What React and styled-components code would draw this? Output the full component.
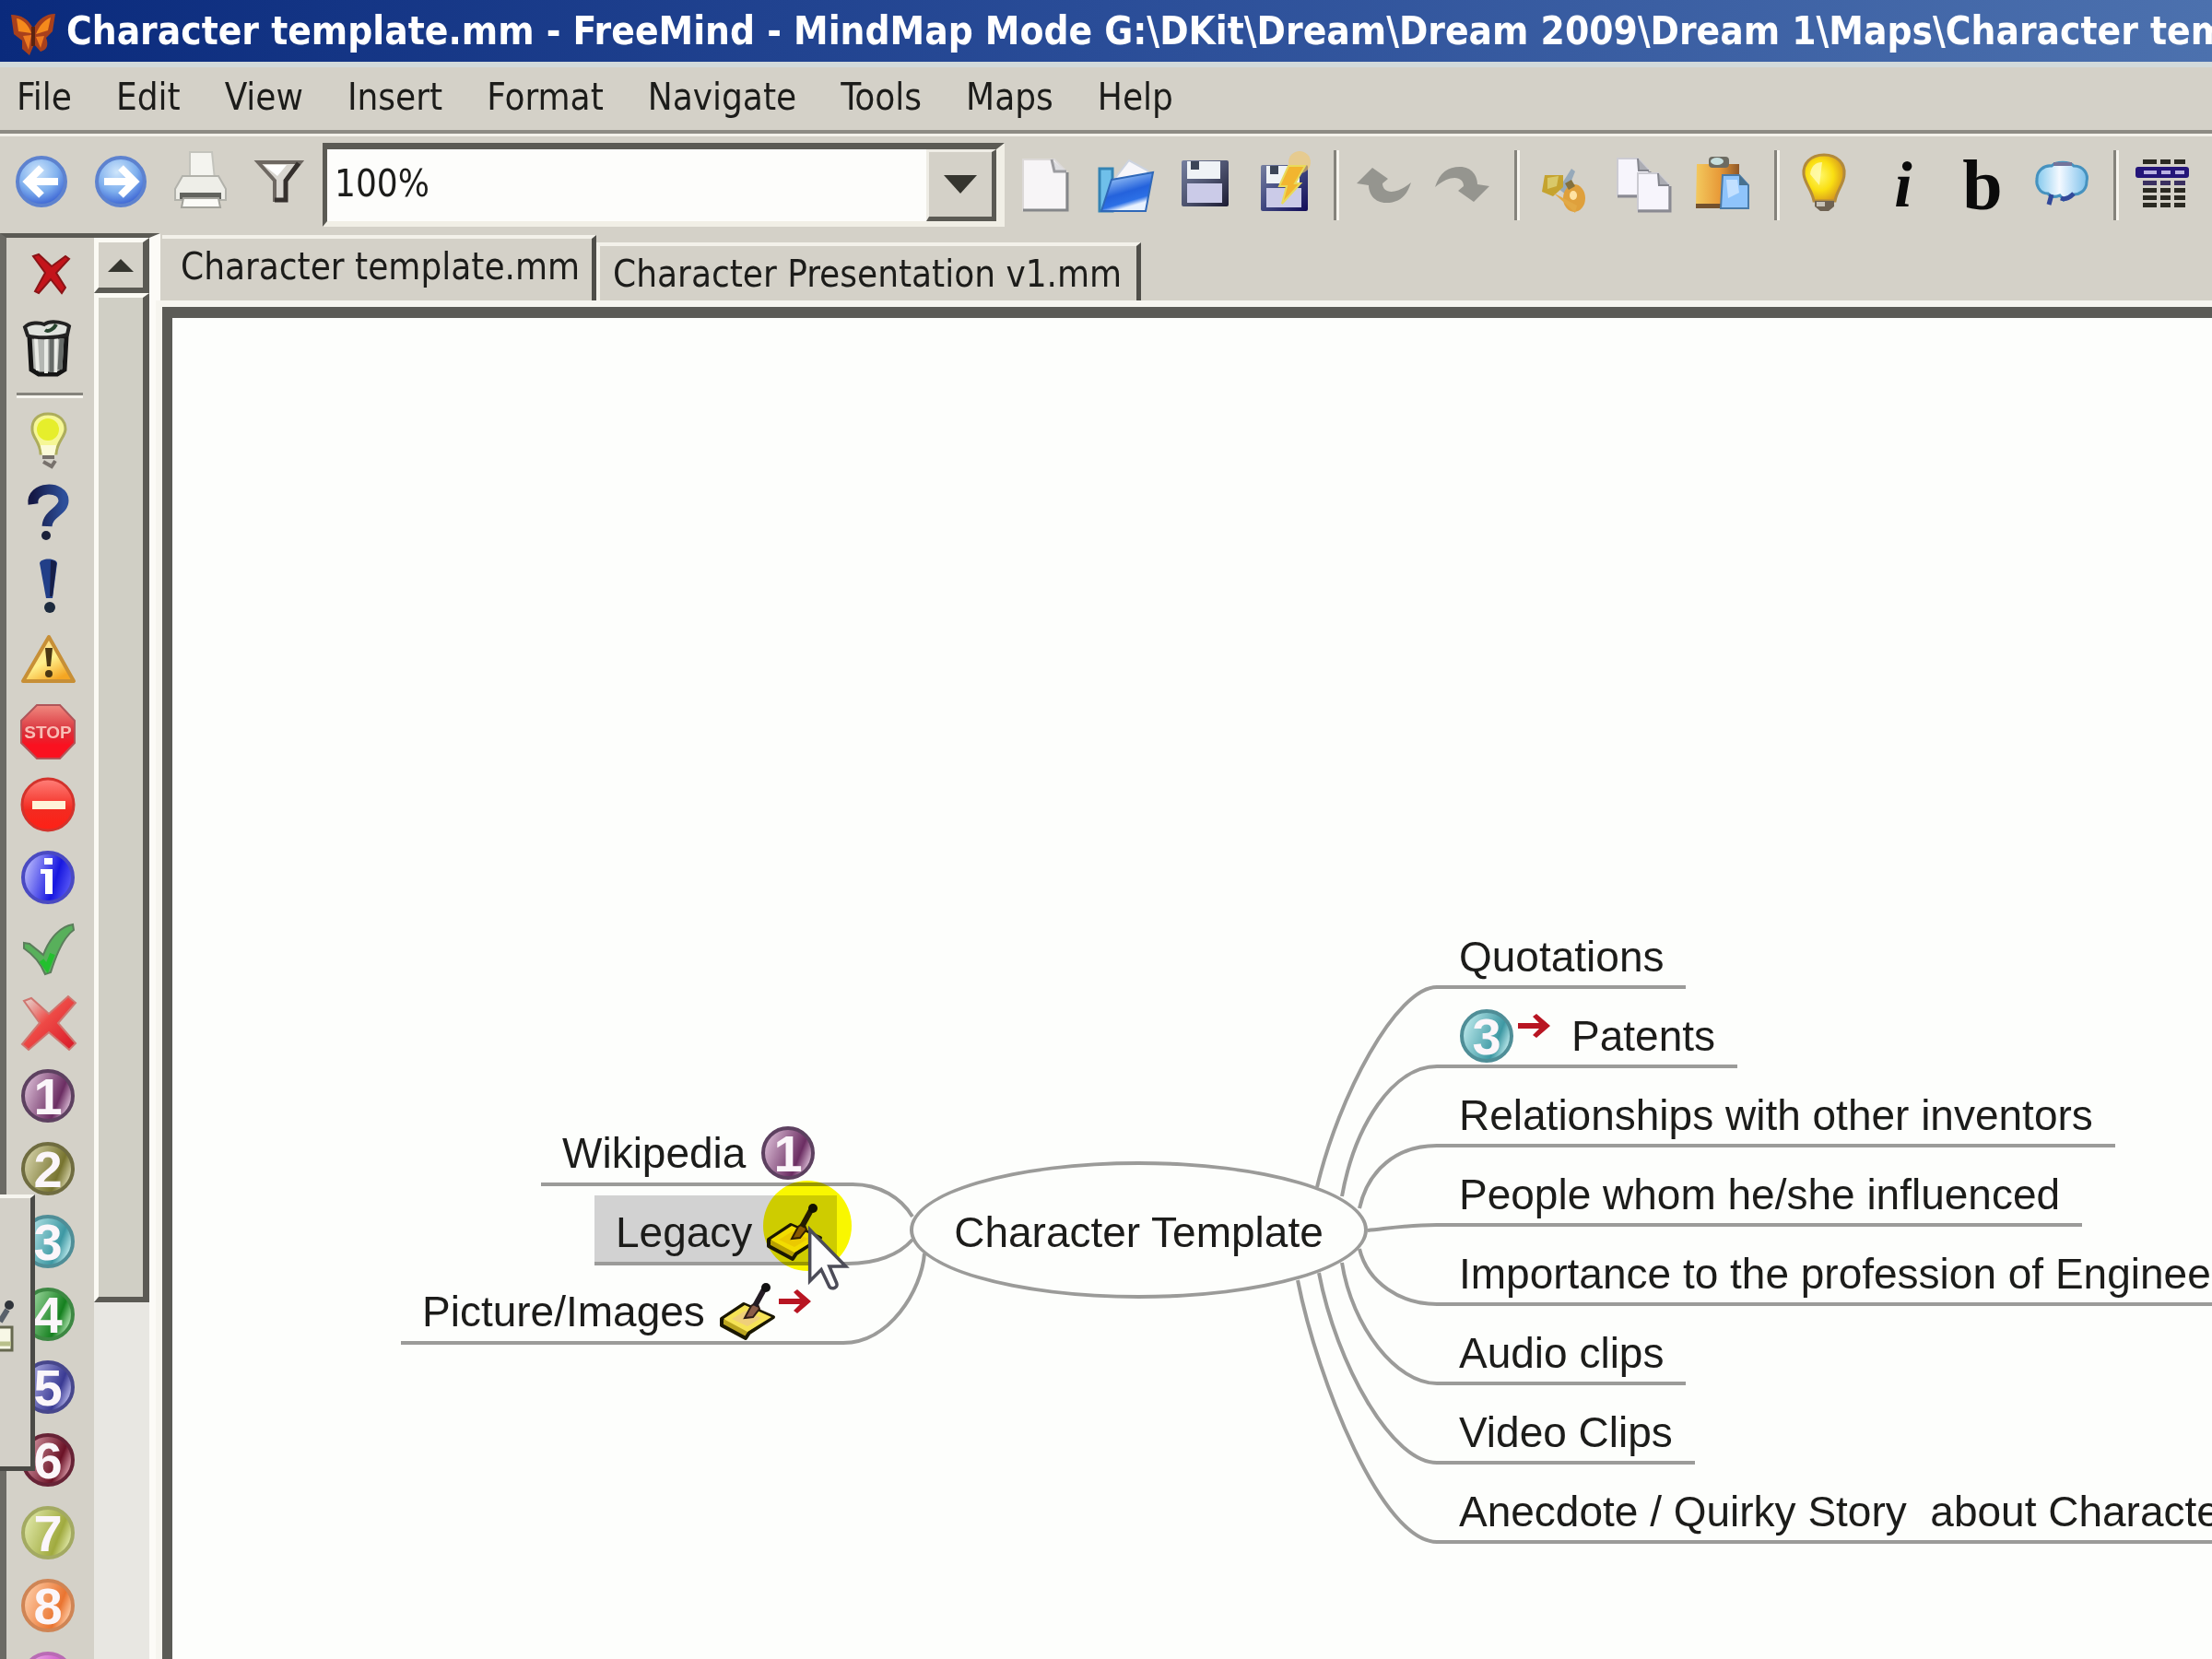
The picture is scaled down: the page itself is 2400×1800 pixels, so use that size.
import React, { useState } from "react";
import styled, { createGlobalStyle } from "styled-components";

const UI_FONT = `"DejaVu Sans Condensed", "DejaVu Sans", sans-serif`;
const MAP_FONT = `"Liberation Sans", Arial, sans-serif`;

const ROW_STEP = 86;
const RIGHT_X = 1372;

const menus = ["File", "Edit", "View", "Insert", "Format", "Navigate", "Tools", "Maps", "Help"];

const rightNodes = [
  { text: "Quotations" },
  { text: "Patents", ball: 3, link: true },
  { text: "Relationships with other inventors" },
  { text: "People whom he/she influenced" },
  { text: "Importance to the profession of Engineering" },
  { text: "Audio clips" },
  { text: "Video Clips" },
  { text: "Anecdote / Quirky Story  about Character" },
];

const leftNodes = [
  { text: "Wikipedia", x: 400, y: 866, ball: 1 },
  { text: "Legacy", x: 458, y: 952, note: true, selected: true },
  { text: "Picture/Images", x: 248, y: 1038, note: true, link: true },
];

const edges = [
  // right side
  "M1242 943 C1265 845 1328 726 1372 726",
  "M1269 953 C1283 875 1325 812 1372 812",
  "M1288 966 C1297 925 1328 898 1372 898",
  "M1297 990 C1318 988 1338 984 1372 984",
  "M1288 1010 C1297 1047 1333 1070 1372 1070",
  "M1269 1025 C1280 1095 1328 1156 1372 1156",
  "M1244 1036 C1263 1135 1323 1242 1372 1242",
  "M1221 1044 C1243 1155 1313 1328 1372 1328",
  // left side
  "M710 940 L738 940 C768 940 791 955 803 975",
  "M710 1026 L733 1026 C763 1026 788 1017 803 1000",
  "M710 1112 L728 1112 C778 1112 813 1055 816 1015",
];

const ballColors = {
  1: ["#e0c3db", "#6b2d62", "#5d4160"],
  2: ["#d9d6ae", "#77742f", "#6f6c40"],
  3: ["#c4eef0", "#3d98a3", "#4f8e97"],
  4: ["#b4e6b4", "#15801f", "#3d8843"],
  5: ["#bdbdf0", "#3a3a93", "#47478c"],
  6: ["#dfa3b0", "#6b1226", "#672336"],
  7: ["#e3ebae", "#a0aa3e", "#a3aa62"],
  8: ["#ffd0ab", "#ea7430", "#cf8555"],
  9: ["#f3b4ee", "#c74fc2", "#b96bb5"],
};

const Svg = ({ children, size = 60 }) => (
  <svg width={size} height={size} viewBox="0 0 60 60" aria-hidden="true">
    {children}
  </svg>
);

const BallIcon = ({ n, scope = "bar" }) => {
  const [light, dark, rim] = ballColors[n];
  const id = `ball-${scope}-${n}`;
  return (
    <Svg>
      <defs>
        <linearGradient id={id} x1="0" y1="0.2" x2="1" y2="0.6">
          <stop offset="0" stopColor={light} />
          <stop offset="0.75" stopColor={dark} />
          <stop offset="1" stopColor={light} />
        </linearGradient>
      </defs>
      <circle cx="30" cy="30" r="27" fill={`url(#${id})`} stroke={rim} strokeWidth="4" />
      <text
        x="30"
        y="50"
        textAnchor="middle"
        fontFamily={MAP_FONT}
        fontSize="56"
        fontWeight="bold"
        fill="#fbf6fa"
      >
        {n}
      </text>
    </Svg>
  );
};

const ArrowBallIcon = ({ forward }) => (
  <Svg>
    <defs>
      <radialGradient id={forward ? "fwd" : "back"} cx="0.42" cy="0.3" r="0.75">
        <stop offset="0" stopColor="#cfe6fb" />
        <stop offset="0.55" stopColor="#7fb0ee" />
        <stop offset="1" stopColor="#2f56cf" />
      </radialGradient>
    </defs>
    <circle
      cx="30"
      cy="26"
      r="26"
      fill={`url(#${forward ? "fwd" : "back"})`}
      stroke="#5d82cf"
      strokeWidth="4"
    />
    <path
      d={forward ? "M12 26H44M30 11L45 26L30 41" : "M48 26H16M30 11L15 26L30 41"}
      fill="none"
      stroke="#fff"
      strokeWidth="8"
    />
  </Svg>
);

const PrinterIcon = () => (
  <Svg>
    <path d="M19 24L19 -6H43L46 24Z" fill="#f4f4ef" stroke="#c3c3bc" strokeWidth="2" />
    <path d="M11 20H50L58 34V46H3V34Z" fill="#eeeee8" stroke="#b2b2ab" strokeWidth="2" />
    <rect x="8" y="38" width="45" height="7" fill="#62635e" />
    <path d="M12 44H50L52 54H10Z" fill="#fbfbf7" stroke="#a3a39c" strokeWidth="2" />
  </Svg>
);

const FilterIcon = () => (
  <Svg>
    <path d="M7 5H53L37 25V46H25V25Z" fill="#d9d6d0" stroke="#6e6862" strokeWidth="4" />
    <path d="M13 8H38L28 20Z" fill="#fff" />
    <path d="M51 6L37 25V46H25" fill="none" stroke="#35302d" strokeWidth="5" />
  </Svg>
);

const NewIcon = () => (
  <Svg>
    <path d="M7 2H41L54 15V57H7Z" fill="#f7f5f7" stroke="#dcd9d8" strokeWidth="2" />
    <path d="M38 2L41 15H54" fill="#dddde0" stroke="#9c9ca0" strokeWidth="3" />
    <path d="M55 16V57H7" fill="none" stroke="#85878a" strokeWidth="3" />
  </Svg>
);

const OpenIcon = () => (
  <Svg>
    <defs>
      <linearGradient id="open" x1="0.3" y1="0" x2="0.7" y2="1">
        <stop offset="0" stopColor="#a9d1fa" />
        <stop offset="0.5" stopColor="#2462dc" />
        <stop offset="0.72" stopColor="#2c70e6" />
        <stop offset="0.85" stopColor="#e8f2ff" />
      </linearGradient>
    </defs>
    <path d="M4 12H18V58H4Z" fill="#6fc0ea" stroke="#3484b4" strokeWidth="3" />
    <path d="M18 26L36 3L56 14L58 24Z" fill="#f6f6fa" stroke="#ccd3df" strokeWidth="2" />
    <path d="M17 24L62 16L54 58H6Z" fill="url(#open)" stroke="#2f68b8" strokeWidth="2" />
  </Svg>
);

const SaveIcon = ({ as }) => (
  <Svg>
    <defs>
      <linearGradient id={as ? "diskAs" : "disk"} x1="0" y1="0" x2="1" y2="1">
        <stop offset="0" stopColor="#7680a0" />
        <stop offset="0.5" stopColor={as ? "#3f467f" : "#4e5470"} />
        <stop offset="1" stopColor={as ? "#120c58" : "#1b1b32"} />
      </linearGradient>
    </defs>
    <rect x="7" y={as ? 8 : 3} width="51" height="50" rx="2" fill={`url(#${as ? "diskAs" : "disk"})`} />
    <rect x="13" y={as ? 9 : 4} width="36" height="19" fill="#eff3f6" />
    <rect x="17" y={as ? 9 : 4} width="9" height="9" fill="#3c4658" />
    <rect x="13" y={as ? 33 : 28} width="38" height="21" fill="#cbcbe8" />
    {as && <circle cx="49" cy="5" r="12" fill="#f2c76a" opacity="0.6" />}
    {as && <path d="M37 9H55L44 28H50L30 50L35 31H27Z" fill="#f2b52f" stroke="#e9da5c" strokeWidth="2" />}
  </Svg>
);

const UndoIcon = ({ redo }) => (
  <Svg>
    <g transform={redo ? "rotate(180 30 29.5)" : undefined}>
      <path
        d="M1 28L18 11L35 23L29 28C29 38 42 42 60 27C55 43 46 49 33 49C20 49 14 39 14 30Z"
        fill="#95958f"
      />
    </g>
  </Svg>
);

const CutIcon = () => (
  <Svg>
    <path d="M24 34L38 12L42 15L32 40Z" fill="#96a9ba" />
    <path d="M9 19H29V32L18 42L6 37Z" fill="#c5a32f" />
    <path d="M12 22L24 20L22 31L12 34Z" fill="#d9c969" />
    <ellipse cx="41" cy="44" rx="12" ry="15" fill="#dfa03c" />
    <ellipse cx="40" cy="41" rx="4" ry="5" fill="#ffe2a2" />
    <path d="M18 38L36 54L42 60L44 52Z" fill="#e2a945" />
    <path d="M31 28L38 24L42 31L35 35Z" fill="#84713e" />
  </Svg>
);

const Sheet = ({ x, y }) => (
  <g transform={`translate(${x} ${y})`}>
    <path d="M0 0H22L34 13V40H0Z" fill="#f7f5fc" stroke="#cccbd2" strokeWidth="2" />
    <path d="M22 0L23 13H34" fill="#abacb3" stroke="#84858d" strokeWidth="2" />
    <path d="M35 14V41H0" fill="none" stroke="#8a8a92" strokeWidth="3" />
  </g>
);

const CopyIcon = () => (
  <Svg>
    <Sheet x="2" y="1" />
    <Sheet x="24" y="17" />
  </Svg>
);

const PasteIcon = () => (
  <Svg>
    <defs>
      <linearGradient id="clip">
        <stop offset="0" stopColor="#f3c95e" />
        <stop offset="0.55" stopColor="#e89a38" />
        <stop offset="1" stopColor="#8e5627" />
      </linearGradient>
    </defs>
    <path d="M2 7H48V54H1Z" fill="url(#clip)" />
    <path d="M1 50H28V55H1Z" fill="#73512e" />
    <rect x="15" y="-1" width="22" height="12" rx="4" fill="#6c6b62" />
    <ellipse cx="24" cy="4" rx="7" ry="4" fill="#c6dedd" />
    <path d="M30 19H48L58 30V55H28Z" fill="#8fc4fb" stroke="#4b7ba8" strokeWidth="2" />
    <path d="M34 24H46L48 38L36 44Z" fill="#c2e0ff" />
    <path d="M48 19V30H58" fill="#48718f" />
  </Svg>
);

const BulbIcon = () => (
  <Svg>
    <defs>
      <radialGradient id="bulb" cx="0.4" cy="0.45" r="0.6">
        <stop offset="0" stopColor="#fff86a" />
        <stop offset="0.55" stopColor="#fadf12" />
        <stop offset="1" stopColor="#d79a1c" />
      </radialGradient>
    </defs>
    <path
      d="M30 -3C15 -3 7 7 8 18C9 28 17 35 19 47H42C44 35 52 28 52 18C53 7 45 -3 30 -3Z"
      fill="url(#bulb)"
      stroke="#b28a3c"
      strokeWidth="3"
    />
    <path d="M15 18C16 9 21 5 28 5L25 30Z" fill="#fffbb8" opacity="0.8" />
    <path d="M20 47H41V53L35 58H26L20 53Z" fill="#6e6252" />
    <rect x="22" y="48" width="9" height="5" fill="#c8c3b8" />
  </Svg>
);

const CloudIcon = () => (
  <Svg>
    <defs>
      <linearGradient id="cloud">
        <stop offset="0" stopColor="#83c9ee" />
        <stop offset="0.45" stopColor="#f4f9ff" />
        <stop offset="0.6" stopColor="#d3eafb" />
        <stop offset="1" stopColor="#7cc0ea" />
      </linearGradient>
    </defs>
    <path
      d="M19 9C24 4 38 4 43 9C54 9 59 18 57 26C57 36 49 40 43 40L32 46L28 41C23 43 18 43 15 39C5 39 2 29 3 23C3 14 11 8 19 9Z"
      fill="url(#cloud)"
      stroke="#4692bf"
      strokeWidth="3"
    />
    <path d="M21 7H41" stroke="#73749b" strokeWidth="4" />
    <path d="M29 44C34 46 39 43 43 39M19 40L16 51" stroke="#32499a" strokeWidth="5" fill="none" />
  </Svg>
);

const TableIcon = () => (
  <Svg>
    {[2, 25, 33, 41, 49].map((y) => (
      <g key={y} fill={y === 25 ? "#3a3060" : "#2b2a22"}>
        <rect x="8" y={y} width="15" height="5" />
        <rect x="27" y={y} width="11" height="5" />
        <rect x="42" y={y} width="12" height="5" />
      </g>
    ))}
    <rect x="0" y="10" width="58" height="12" rx="3" fill="#241579" />
    <path d="M9 16H23M28 16H38M43 16H53" stroke="#b9b1e2" strokeWidth="4" />
  </Svg>
);

const RemoveIcon = () => (
  <Svg>
    <path
      d="M14 10L20 8L34 21L49 10L53 13L39 28L49 44L45 50L33 35L20 50L16 48L27 28Z"
      fill="#c4141b"
      stroke="#8a1417"
      strokeWidth="2"
    />
  </Svg>
);

const TrashIcon = () => (
  <Svg>
    <path d="M10 18L12 54L20 59H40L48 54L50 18Z" fill="#b4b7b3" stroke="#151515" strokeWidth="5" />
    <path d="M17 20L19 55M28 20V58M39 20L38 57" stroke="#e9ebe6" strokeWidth="4" />
    <path d="M34 20V57M45 20L43 54" stroke="#666b68" strokeWidth="5" />
    <path d="M5 8C10 2 22 3 26 5C34 -1 50 4 53 7L51 16C40 20 16 20 8 17Z" fill="#dfe2dd" stroke="#222" strokeWidth="4" />
    <path d="M27 11C31 14 37 9 39 5" stroke="#27442f" strokeWidth="4" fill="none" />
  </Svg>
);

const IdeaIcon = () => (
  <Svg>
    <path
      d="M30 1C18 1 12 9 13 19C14 28 21 31 22 44H39C40 31 48 27 49 18C49 8 42 1 30 1Z"
      fill="#f6f796"
      stroke="#adad5c"
      strokeWidth="3"
    />
    <circle cx="30" cy="18" r="12" fill="#e6ee2b" />
    <path d="M22 35H39L37 47H24Z" fill="#fbfad8" />
    <path d="M24 48H37M25 53L34 58L38 52" stroke="#77716c" strokeWidth="4" fill="none" />
  </Svg>
);

const QuestionIcon = () => (
  <Svg>
    <defs>
      <linearGradient id="question">
        <stop offset="0" stopColor="#151946" />
        <stop offset="1" stopColor="#2d4f9a" />
      </linearGradient>
    </defs>
    <path
      d="M14 20C11 0 47 -1 47 16C47 28 30 29 29 44"
      fill="none"
      stroke="url(#question)"
      strokeWidth="11"
    />
    <circle cx="28" cy="54" r="5" fill="#1a2039" />
  </Svg>
);

const BangIcon = () => (
  <Svg>
    <path d="M21 5C22 -1 39 -1 40 5L35 43H28Z" fill="#223f88" />
    <path d="M33 2C38 2 40 4 39 8L35 41H32Z" fill="#161f49" />
    <circle cx="32" cy="53" r="6" fill="#1d2b3e" />
  </Svg>
);

const WarnIcon = () => (
  <Svg>
    <defs>
      <linearGradient id="warn" x1="0" y1="0" x2="0.6" y2="1">
        <stop offset="0" stopColor="#f7cd8a" />
        <stop offset="0.6" stopColor="#fff08c" />
        <stop offset="1" stopColor="#f5a623" />
      </linearGradient>
    </defs>
    <path d="M31 6L58 54H3Z" fill="url(#warn)" stroke="#c78f36" strokeWidth="4" strokeLinejoin="round" />
    <path d="M27 18H35L33 38H29Z" fill="#4a3713" />
    <circle cx="31" cy="46" r="4" fill="#4a3713" />
  </Svg>
);

const StopIcon = () => (
  <Svg>
    <defs>
      <linearGradient id="stop" x1="0" y1="0" x2="0" y2="1">
        <stop offset="0" stopColor="#f08a80" />
        <stop offset="0.5" stopColor="#d9303a" />
        <stop offset="0.75" stopColor="#fa1120" />
      </linearGradient>
    </defs>
    <path d="M18 1H43L59 18V42L43 59H18L1 42V18Z" fill="url(#stop)" stroke="#b0565a" strokeWidth="2" />
    <text x="30" y="37" textAnchor="middle" fontFamily={MAP_FONT} fontSize="19" fontWeight="bold" fill="#f9bcb4">
      STOP
    </text>
  </Svg>
);

const NoEntryIcon = () => (
  <Svg>
    <defs>
      <linearGradient id="noentry" x1="0" y1="0" x2="0" y2="1">
        <stop offset="0" stopColor="#ff8079" />
        <stop offset="0.6" stopColor="#f32a20" />
        <stop offset="1" stopColor="#ff2016" />
      </linearGradient>
    </defs>
    <circle cx="30" cy="30" r="28" fill="url(#noentry)" stroke="#d3332c" strokeWidth="3" />
    <rect x="13" y="26" width="36" height="9" fill="#fff3d8" />
  </Svg>
);

const InfoIcon = () => (
  <Svg>
    <defs>
      <linearGradient id="info" x1="0" y1="0.2" x2="1" y2="0.5">
        <stop offset="0" stopColor="#c6c6ff" />
        <stop offset="0.7" stopColor="#1717e0" />
        <stop offset="1" stopColor="#5656f4" />
      </linearGradient>
    </defs>
    <circle cx="30" cy="30" r="27" fill="url(#info)" stroke="#4a4ac2" strokeWidth="4" />
    <rect x="26" y="9" width="9" height="7" fill="#fff" />
    <path d="M22 21H35V48H27V26H22Z" fill="#fff" />
  </Svg>
);

const CheckIcon = () => (
  <Svg>
    <path
      d="M4 22L10 23L25 35C32 16 44 4 57 2L58 8C46 16 38 38 33 54L27 56C22 44 13 34 4 28Z"
      fill="#58b05b"
      stroke="#5b7d5b"
      strokeWidth="2"
    />
    <path d="M23 41L29 49L35 34" fill="none" stroke="#23c02e" strokeWidth="6" />
  </Svg>
);

const CancelIcon = () => (
  <Svg>
    <defs>
      <linearGradient id="cancel" x1="0" y1="0" x2="1" y2="1">
        <stop offset="0.1" stopColor="#e6c5c0" />
        <stop offset="0.45" stopColor="#ee4a46" />
        <stop offset="1" stopColor="#d81828" />
      </linearGradient>
    </defs>
    <path
      d="M4 6L12 3L31 20L52 1L60 8L41 30L60 52L53 59L31 40L9 59L2 53L21 30Z"
      fill="url(#cancel)"
      stroke="#cf7670"
      strokeWidth="2"
    />
  </Svg>
);

const NoteIcon = () => (
  <Svg>
    <path d="M2 38L26 22L58 36L32 53L28 59L2 45Z" fill="#bba51f" stroke="#1a1700" strokeWidth="4" strokeLinejoin="round" />
    <path d="M4 38L27 23L56 36L30 52Z" fill="#f6e356" />
    <path d="M13 38L28 29L45 37L30 46Z" fill="#efcf7a" />
    <path d="M27 37L34 24L40 20L43 27L36 36Z" fill="#8b5c48" stroke="#2f1d16" strokeWidth="2" />
    <path d="M38 24L49 4" stroke="#241c24" strokeWidth="6" />
    <circle cx="50" cy="4" r="5" fill="#111" />
  </Svg>
);

const LinkArrow = () => (
  <svg width="36" height="26" viewBox="0 0 36 26" aria-hidden="true">
    <path d="M0 10H23L16 3L20 0L35 13L20 26L16 23L23 16H0Z" fill="#b81522" />
  </svg>
);

const Butterfly = () => (
  <svg width="52" height="60" viewBox="0 0 52 60" aria-hidden="true">
    <path d="M2 12C13 12 21 17 26 27C32 17 39 11 50 11L47 30L40 37C43 45 41 50 34 52L27 44L22 56L14 49L14 40L5 33Z" fill="#a8401c" />
    <path d="M8 16C15 17 21 23 24 32L10 30ZM45 15L42 29L29 33C33 23 38 18 45 15Z" fill="#f58a1c" />
    <path d="M15 35L24 34L21 50ZM29 36L38 35L34 48Z" fill="#ee7a20" />
    <path d="M26 25V46" stroke="#5a2412" strokeWidth="4" />
  </svg>
);

const toolGroups = [
  [
    ["New", <NewIcon />],
    ["Open", <OpenIcon />],
    ["Save", <SaveIcon />],
    ["Save as", <SaveIcon as />],
  ],
  [
    ["Undo", <UndoIcon />],
    ["Redo", <UndoIcon redo />],
  ],
  [
    ["Cut", <CutIcon />],
    ["Copy", <CopyIcon />],
    ["Paste", <PasteIcon />],
  ],
];

const sideIcons = [
  ["Idea", <IdeaIcon />],
  ["Question", <QuestionIcon />],
  ["Important", <BangIcon />],
  ["Warning", <WarnIcon />],
  ["Stop", <StopIcon />],
  ["No entry", <NoEntryIcon />],
  ["Info", <InfoIcon />],
  ["Ok", <CheckIcon />],
  ["Not ok", <CancelIcon />],
  ...[1, 2, 3, 4, 5, 6, 7, 8, 9].map((n) => [`Priority ${n}`, <BallIcon n={n} />]),
];

const MapNode = ({ text, x, y, ball, note, link, selected, before }) => {
  const icons = (ball || note || link) && (
    <NodeIcons>
      {ball && <BallIcon n={ball} scope="map" />}
      {note && <NoteIcon />}
      {link && <LinkArrow />}
    </NodeIcons>
  );
  return (
    <Node style={{ left: x, top: y }} $selected={selected} $before={before}>
      {before && icons}
      <span>{text}</span>
      {!before && icons}
    </Node>
  );
};

const App = () => {
  const [zoom, setZoom] = useState("100%");

  return (
    <Window>
      <GlobalStyle />
      <TitleBar>
        <Butterfly />
        <TitleText>
          Character template.mm - FreeMind - MindMap Mode G:\DKit\Dream\Dream 2009\Dream
          1\Maps\Character template.mm
        </TitleText>
      </TitleBar>

      <MenuBar>
        {menus.map((name) => (
          <MenuItem key={name} type="button">
            {name}
          </MenuItem>
        ))}
      </MenuBar>

      <ToolBar>
        <ToolButton aria-label="Back"><ArrowBallIcon /></ToolButton>
        <ToolButton aria-label="Forward"><ArrowBallIcon forward /></ToolButton>
        <ToolButton aria-label="Print"><PrinterIcon /></ToolButton>
        <ToolButton aria-label="Filter"><FilterIcon /></ToolButton>
        <Combo>
          <ZoomSelect aria-label="Zoom" value={zoom} onChange={(e) => setZoom(e.target.value)}>
            <option>50%</option>
            <option>100%</option>
            <option>200%</option>
          </ZoomSelect>
          <ComboArrow>
            <svg width="36" height="20" viewBox="0 0 36 20" aria-hidden="true">
              <path d="M0 0H36L18 20Z" fill="#35352f" />
            </svg>
          </ComboArrow>
        </Combo>
        {toolGroups.map((group, i) => (
          <React.Fragment key={i}>
            {group.map(([label, icon]) => (
              <ToolButton key={label} aria-label={label}>{icon}</ToolButton>
            ))}
            <ToolSeparator />
          </React.Fragment>
        ))}
        <ToolButton aria-label="Bulb"><BulbIcon /></ToolButton>
        <StyleButton $italic>i</StyleButton>
        <StyleButton>b</StyleButton>
        <ToolButton aria-label="Cloud"><CloudIcon /></ToolButton>
        <ToolSeparator />
        <ToolButton aria-label="Attributes"><TableIcon /></ToolButton>
      </ToolBar>

      <Body>
        <SideBar>
          <IconColumn>
            <SideButton aria-label="Remove last icon"><RemoveIcon /></SideButton>
            <SideButton aria-label="Remove all icons"><TrashIcon /></SideButton>
            <SideSeparator />
            {sideIcons.map(([label, icon]) => (
              <SideButton key={label} aria-label={label}>{icon}</SideButton>
            ))}
          </IconColumn>
          <ScrollBar>
            <ScrollUp aria-label="Scroll up">
              <svg width="28" height="14" viewBox="0 0 28 14" aria-hidden="true">
                <path d="M0 14H28L14 0Z" fill="#35352f" />
              </svg>
            </ScrollUp>
            <ScrollThumb />
          </ScrollBar>
          <DragGhost>
            <svg width="16" height="60" viewBox="0 0 16 60" aria-hidden="true">
              <path d="M0 24L8 11" stroke="#59616b" strokeWidth="6" />
              <circle cx="10" cy="6" r="5" fill="#30343a" />
              <rect x="-4" y="30" width="17" height="25" fill="#f7f7e6" stroke="#66684f" strokeWidth="3" />
              <path d="M0 48H12" stroke="#b9c08b" strokeWidth="5" />
            </svg>
          </DragGhost>
        </SideBar>

        <Main>
          <Tabs>
            <Tab $active>Character template.mm</Tab>
            <Tab>Character Presentation v1.mm</Tab>
          </Tabs>
          <Canvas>
            <Edges aria-hidden="true">
              {edges.map((d) => (
                <path key={d} d={d} />
              ))}
            </Edges>
            <Root>Character Template</Root>
            {rightNodes.map((node, i) => (
              <MapNode key={node.text} {...node} x={RIGHT_X} y={652 + i * ROW_STEP} before />
            ))}
            {leftNodes.map((node) => (
              <MapNode key={node.text} {...node} />
            ))}
            <Highlight />
            <Pointer width="46" height="74" viewBox="0 0 52 78" aria-hidden="true">
              <path
                d="M3 3V66L17 52L27 73C30 77 38 74 36 69L27 48H47Z"
                fill="#fdfdfd"
                stroke="#4c4c58"
                strokeWidth="4"
              />
            </Pointer>
          </Canvas>
        </Main>
      </Body>
    </Window>
  );
};

const GlobalStyle = createGlobalStyle`
  * {
    box-sizing: border-box;
  }
  body {
    margin: 0;
    overflow: hidden;
    background: #d4d0c8;
  }
  button {
    margin: 0;
    padding: 0;
    border: 0;
    background: none;
    font: inherit;
    color: inherit;
  }
  svg {
    display: block;
    flex: none;
    overflow: visible;
  }
`;

const Window = styled.div`
  display: flex;
  flex-direction: column;
  height: 100vh;
  overflow: hidden;
  background: #d4d1c8;
  color: #1c1c1a;
  font-family: ${UI_FONT};
  font-size: 40px;
  line-height: 48px;
  white-space: nowrap;
`;

const TitleBar = styled.header`
  display: flex;
  align-items: center;
  gap: 10px;
  flex: none;
  height: 67px;
  padding-left: 10px;
  background: linear-gradient(to right, #0a2a7c, #2a4d98 50%, #4c71ae);
  overflow: hidden;
`;

const TitleText = styled.h1`
  margin: 0;
  color: #fff;
  font-size: 42px;
  line-height: 48px;
`;

const MenuBar = styled.nav`
  display: flex;
  flex: none;
  height: 81px;
  padding-top: 8px;
  border-top: 6px solid #d2dadb;
  border-bottom: 3px solid #f3f1ea;
  box-shadow: inset 0 -4px #8d8b84;
`;

const MenuItem = styled.button`
  height: 48px;
  padding: 0 24px;

  &:first-child {
    padding-left: 18px;
  }
`;

const ToolBar = styled.div`
  display: flex;
  align-items: center;
  flex: none;
  height: 105px;
  padding-left: 2px;
`;

const ToolButton = styled.button`
  display: flex;
  justify-content: center;
  align-items: center;
  flex: none;
  width: 86px;
  height: 76px;
`;

const StyleButton = styled(ToolButton)`
  color: #0b0b0b;
  font-family: "Liberation Serif", "Times New Roman", serif;
  font-size: ${(p) => (p.$italic ? "70px" : "78px")};
  font-style: ${(p) => (p.$italic ? "italic" : "normal")};
  font-weight: bold;
  line-height: 76px;
`;

const ToolSeparator = styled.div`
  flex: none;
  width: 6px;
  height: 76px;
  margin: 0 5px 0 13px;
  border-left: 3px solid #85837c;
  border-right: 3px solid #f6f4ee;
`;

const Combo = styled.div`
  display: flex;
  flex: none;
  width: 740px;
  height: 91px;
  margin-left: 4px;
  border-style: solid;
  border-width: 7px 9px 6px 5px;
  border-color: #5b5a54 #f1efe6 #f1efe6 #5b5a54;
  background: #fdfdfb;
`;

const ZoomSelect = styled.select`
  flex: 1;
  min-width: 0;
  padding: 0 8px 4px;
  border: 0;
  outline: 0;
  appearance: none;
  background: transparent;
  color: #1c1c1a;
  font-family: ${UI_FONT};
  font-size: 40px;
`;

const ComboArrow = styled.div`
  display: flex;
  justify-content: center;
  align-items: center;
  flex: none;
  width: 76px;
  border-style: solid;
  border-width: 3px 5px 5px 3px;
  border-color: #efede6 #5b5a54 #5b5a54 #efede6;
  background: #d4d1c8;
`;

const Body = styled.div`
  display: flex;
  flex: 1;
  min-height: 0;
`;

const SideBar = styled.aside`
  position: relative;
  display: flex;
  flex: none;
  width: 174px;
  border-top: 5px solid #5b5a54;
  border-left: 7px solid #6b6a64;
  border-right: 12px solid #fcfbf7;
`;

const IconColumn = styled.div`
  flex: 1;
  overflow: hidden;
`;

const SideButton = styled.button`
  display: flex;
  justify-content: center;
  align-items: center;
  width: 90px;
  height: 79px;
`;

const SideSeparator = styled.div`
  width: 72px;
  height: 6px;
  margin: 10px 9px 6px 11px;
  border-top: 3px solid #85837c;
  border-bottom: 3px solid #f6f4ee;
`;

const ScrollBar = styled.div`
  display: flex;
  flex-direction: column;
  flex: none;
  width: 60px;
  background: #e8e7e2;
`;

const ScrollUp = styled.button`
  display: flex;
  justify-content: center;
  align-items: center;
  flex: none;
  height: 60px;
  border-style: solid;
  border-width: 5px 7px 6px 5px;
  border-color: #fbfaf4 #5b5a54 #5b5a54 #fbfaf4;
  background: #d4d1c8;
`;

const ScrollThumb = styled.div`
  flex: none;
  height: 1095px;
  border-style: solid;
  border-width: 5px 7px 6px 5px;
  border-color: #fbfaf4 #5b5a54 #5b5a54 #fbfaf4;
  background: #d0cfc5;
`;

/* toolbar fragment that hangs over the left edge of the window */
const DragGhost = styled.div`
  position: absolute;
  left: -7px;
  top: 1038px;
  width: 38px;
  height: 300px;
  padding-top: 110px;
  border-style: solid;
  border-width: 4px 5px 5px 0;
  border-color: #f6f5ef #4a4a46 #4a4a46 #4a4a46;
  background: #d3d0c8;
`;

const Main = styled.main`
  display: flex;
  flex-direction: column;
  flex: 1;
  min-width: 0;
`;

const Tabs = styled.div`
  display: flex;
  align-items: flex-end;
  flex: none;
  height: 80px;
  padding-left: 2px;
`;

const Tab = styled.button`
  height: ${(p) => (p.$active ? "78px" : "70px")};
  padding: ${(p) => (p.$active ? "6px 13px 20px 20px" : "6px 16px 12px 18px")};
  border-top: 4px solid #f3f1ea;
  border-right: 5px solid #4f4e49;
  box-shadow: ${(p) => (p.$active ? "none" : "inset 4px 0 #f3f1ea")};
  line-height: 48px;
`;

const Canvas = styled.section`
  position: relative;
  flex: 1;
  min-height: 0;
  margin-left: 2px;
  border-top: 12px solid #5b5b56;
  border-left: 11px solid #5b5b56;
  outline: 7px solid #f6f5ef;
  background: #fdfefc;
  overflow: hidden;
  font-family: ${MAP_FONT};
  font-size: 46px;
  line-height: 60px;
`;

const Edges = styled.svg`
  position: absolute;
  left: 0;
  top: 0;
  width: 100%;
  height: 100%;
  fill: none;
  stroke: #9b9b99;
  stroke-width: 4px;
`;

const Root = styled.div`
  position: absolute;
  left: 800px;
  top: 915px;
  display: flex;
  justify-content: center;
  align-items: center;
  width: 497px;
  height: 149px;
  padding-top: 4px;
  border: 4px solid #9b9b99;
  border-radius: 50%;
  background: #fdfefc;
`;

const Node = styled.div`
  position: absolute;
  display: flex;
  align-items: center;
  gap: ${(p) => (p.$before ? "22px" : "16px")};
  height: 76px;
  padding: ${(p) => (p.$before ? "10px 24px 0" : "8px 16px 0 23px")};
  border-bottom: 4px solid #9b9b99;
  background: ${(p) => (p.$selected ? "#d2d2d2" : "transparent")};
  white-space: pre;
`;

const NodeIcons = styled.span`
  display: flex;
  gap: 4px;

  svg + svg {
    margin-top: 6px;
  }
`;

const Highlight = styled.div`
  position: absolute;
  left: 641px;
  top: 936px;
  width: 96px;
  height: 98px;
  border-radius: 50%;
  background: #fbf800;
  mix-blend-mode: multiply;
`;

const Pointer = styled.svg`
  position: absolute;
  left: 689px;
  top: 984px;
`;

export default App;
